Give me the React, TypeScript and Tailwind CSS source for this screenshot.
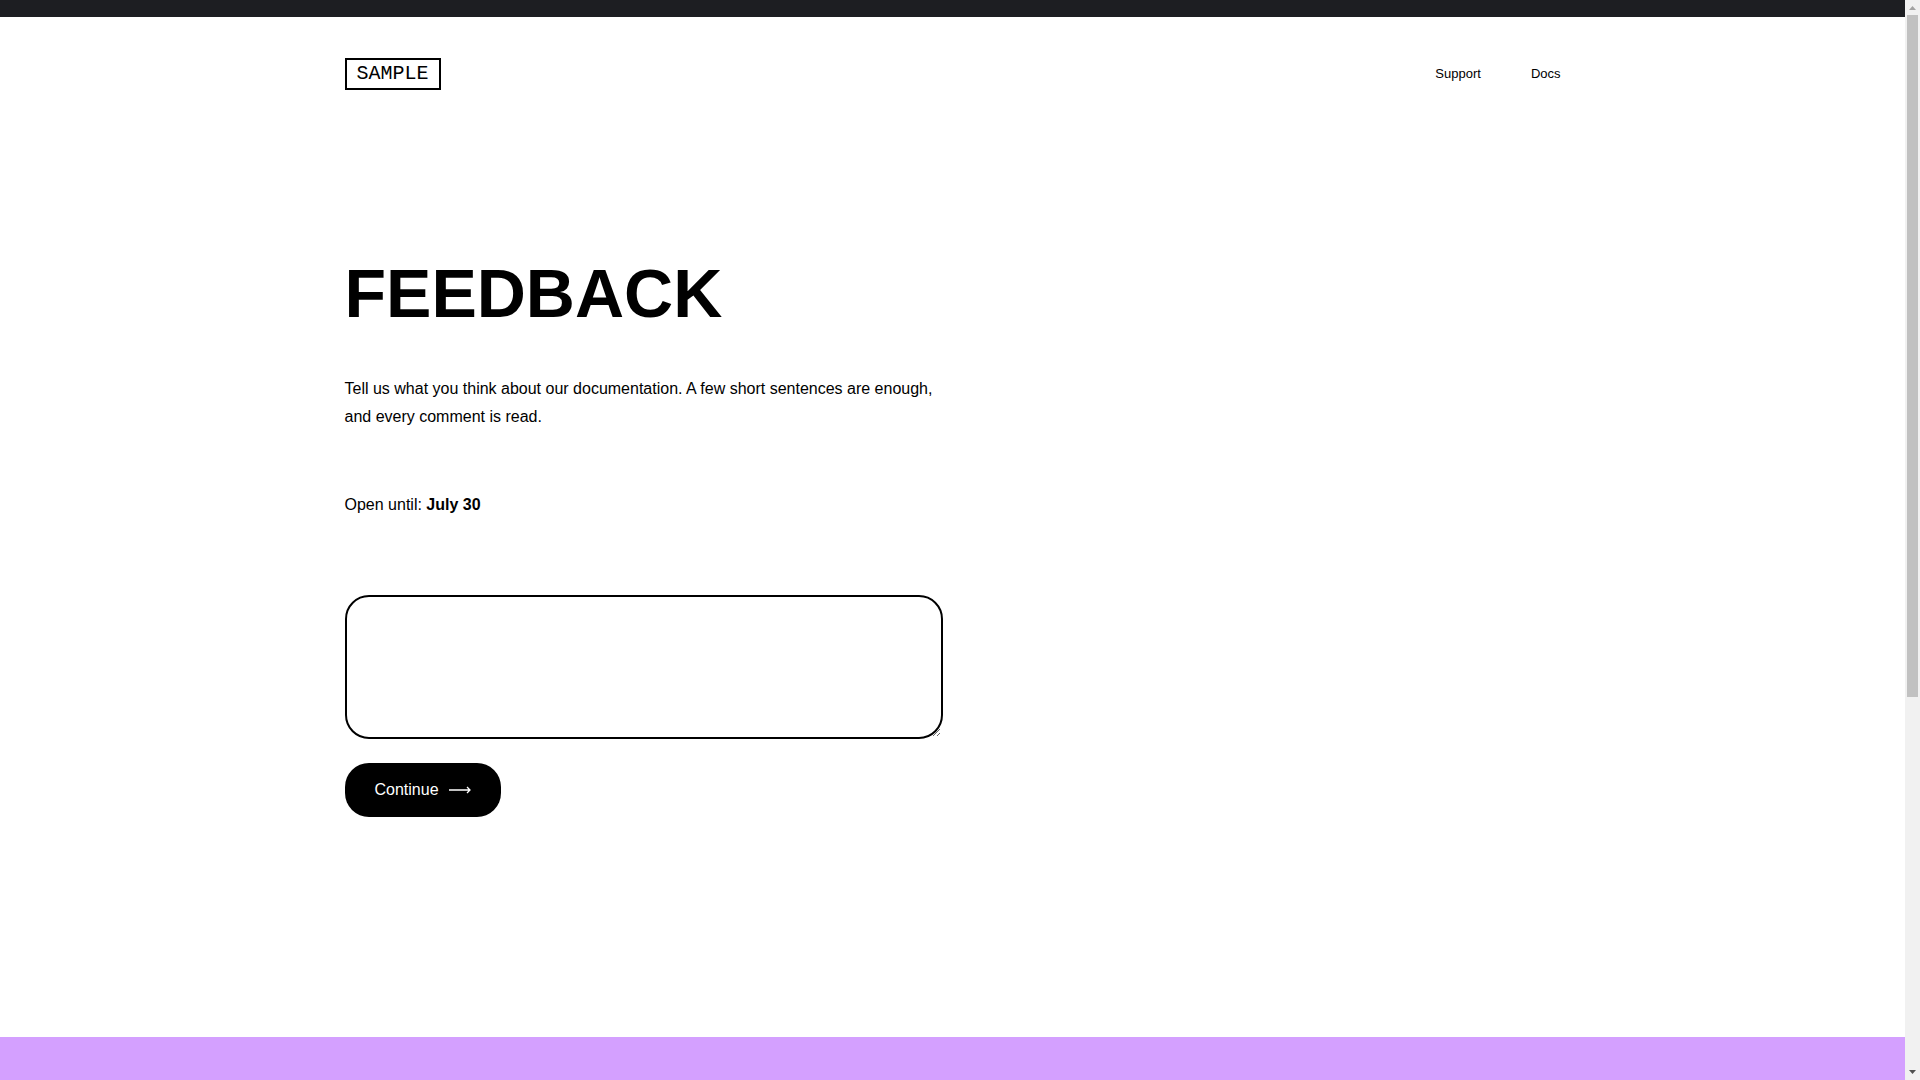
import React, { useState } from 'react'

const links = [
  { name: 'Support', href: '#support' },
  { name: 'Docs', href: '#docs' }
]

const ScrollRail: React.FC = () => (
  <div className="flex w-[15px] shrink-0 flex-col items-center justify-between bg-[#f1f1f1]" aria-hidden="true">
    <div className="flex h-full w-full flex-col items-center">
      <svg className="h-[15px] w-[15px] shrink-0" viewBox="0 0 15 15" fill="#a3a3a3">
        <path d="M4 10h7L7.5 6z" />
      </svg>
      <div className="h-[64%] w-[11px] bg-[#c1c1c1]" />
    </div>
    <svg className="h-[15px] w-[15px] shrink-0" viewBox="0 0 15 15" fill="#505050">
      <path d="M4 5h7L7.5 9z" />
    </svg>
  </div>
)

const App: React.FC = () => {
  const [feedback, setFeedback] = useState('')

  return (
    <div className="flex h-screen bg-white font-['Liberation_Sans',Arial,sans-serif] text-black">
      <div className="flex min-w-0 flex-1 flex-col overflow-hidden">
        <div className="h-[17px] shrink-0 bg-[#1d1e22]" />

        <div className="mx-auto w-full max-w-[1216px] flex-1">
          <header className="flex h-[114px] items-center justify-between">
            <a href="#home" className="border-2 border-black px-2.5 font-['Liberation_Mono',monospace] text-xl">
              SAMPLE
            </a>
            <nav className="flex gap-[50px] text-[13px]">
              {links.map((link) => (
                <a key={link.name} href={link.href}>{link.name}</a>
              ))}
            </nav>
          </header>

          <main className="max-w-[598px] pt-[124px]">
            <h1 className="text-[68px] font-bold leading-[76px]">FEEDBACK</h1>
            <p className="mt-11 text-base leading-7">
              Tell us what you think about our documentation. A few short sentences are enough, and every comment is read.
            </p>
            <p className="mt-15 text-base leading-7">
              Open until: <strong>July 30</strong>
            </p>
            <form className="mt-19" onSubmit={(e) => e.preventDefault()}>
              <textarea
                aria-label="Your feedback"
                value={feedback}
                onChange={(e) => setFeedback(e.target.value)}
                className="block h-36 w-full rounded-3xl border-2 border-black p-5 outline-none"
              />
              <button type="submit" className="mt-6 flex h-[54px] items-center gap-2.5 rounded-3xl bg-black px-[30px] text-base text-white">
                Continue
                <svg width="22" height="8" viewBox="0 0 22 8" fill="none" stroke="currentColor" strokeWidth="1.3" aria-hidden="true">
                  <path d="M0 4h21M18 1l3 3-3 3" />
                </svg>
              </button>
            </form>
          </main>
        </div>

        <footer className="h-[43px] shrink-0 bg-[#d4a0ff]" />
      </div>
      <ScrollRail />
    </div>
  )
}

export default App
